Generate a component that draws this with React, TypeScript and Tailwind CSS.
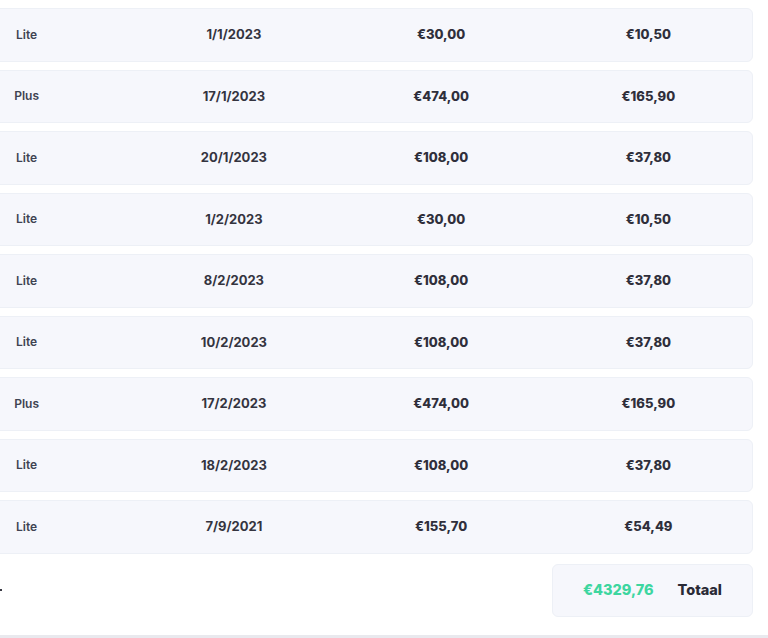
import React from 'react'

const rows = [
  { plan: 'Lite', date: '1/1/2023', amount: '€30,00', fee: '€10,50' },
  { plan: 'Plus', date: '17/1/2023', amount: '€474,00', fee: '€165,90' },
  { plan: 'Lite', date: '20/1/2023', amount: '€108,00', fee: '€37,80' },
  { plan: 'Lite', date: '1/2/2023', amount: '€30,00', fee: '€10,50' },
  { plan: 'Lite', date: '8/2/2023', amount: '€108,00', fee: '€37,80' },
  { plan: 'Lite', date: '10/2/2023', amount: '€108,00', fee: '€37,80' },
  { plan: 'Plus', date: '17/2/2023', amount: '€474,00', fee: '€165,90' },
  { plan: 'Lite', date: '18/2/2023', amount: '€108,00', fee: '€37,80' },
  { plan: 'Lite', date: '7/9/2021', amount: '€155,70', fee: '€54,49' }
]

const App = () => {
  return (
    <div className="w-[768px] h-[638px] overflow-hidden bg-white flex flex-col" style={{ fontFamily: 'Inter, "Noto Sans", sans-serif' }}>
      <div className="-ml-[78px] w-[831px] pt-[8px] flex flex-col gap-[8px]">
        {rows.map((row, i) => (
          <div
            key={i}
            className="h-[53.5px] grid grid-cols-4 items-center bg-[#f6f7fc] border border-[#edf0f6] rounded-md text-[13px] text-[#2f2f3b]"
          >
            <span className="text-center text-[12px] font-semibold text-[#3f4352]">{row.plan}</span>
            <span className="text-center font-bold text-[#34343f]">{row.date}</span>
            <span className="text-center font-extrabold">{row.amount}</span>
            <span className="text-center font-extrabold">{row.fee}</span>
          </div>
        ))}
      </div>

      {/* Total */}
      <div className="flex items-center justify-between mt-[10px] pr-[15px]">
        <div className="w-[2px] h-[2px] bg-[#3a3a44]" />
        <div className="w-[201px] h-[53px] flex items-center justify-center gap-[24px] bg-[#f6f7fc] border border-[#edf0f6] rounded-md text-[14.5px] font-extrabold">
          <span className="text-[#3dd6a0]">€4329,76</span>
          <span className="text-[#2a2a36]">Totaal</span>
        </div>
      </div>

      <div className="mt-[18px] h-[4px] bg-[#e9e9ee]" />
    </div>
  )
}

export default App
